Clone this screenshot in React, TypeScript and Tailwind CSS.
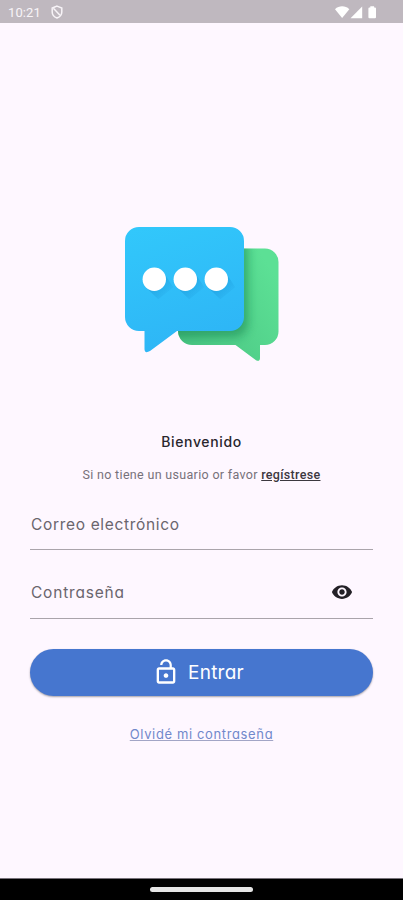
import { useState } from "react";

function StatusBar() {
  return (
    <header className="flex h-[23px] items-center bg-[#bfb8bf] pl-2 pr-[26px] text-[#f8f4f8]">
      <span className="w-[43px] pt-px font-[Roboto] text-[13px] leading-none tracking-[0.1px]">10:21</span>
      <svg width="12" height="14" viewBox="0 0 12 14" fill="none" stroke="currentColor" strokeWidth="1.5">
        <path d="M6 1.1 10.8 3v4c0 2.7-1.9 5-4.8 6-2.9-1-4.8-3.3-4.8-6V3Z" />
        <path d="m2.4 3.3 6.6 7" />
      </svg>
      <svg width="42" height="13" viewBox="0 0 42 13" fill="#fff" className="mt-px ml-auto">
        <path d="M0 3.2C4-.6 10.3-.6 14.3 3.2L7.15 12Z" />
        <path d="M15.5 12.2 27.2.5v11.7Z" />
        <path d="M35.3.3h3.800v1.300h.900a1 1 0 0 1 1 1v8.600a1 1 0 0 1-1 1h-5.600a1 1 0 0 1-1-1V2.600a1 1 0 0 1 1-1h.900Z" />
      </svg>
    </header>
  );
}

function ChatLogo() {
  return (
    <svg width="154" height="135" viewBox="0 0 154 135" className="mx-auto block" aria-hidden>
      <defs>
        <linearGradient id="blue" x1="0" y1="0" x2="0.3" y2="1">
          <stop offset="0" stopColor="#32c8fb" />
          <stop offset="1" stopColor="#2eb6f6" />
        </linearGradient>
        <linearGradient id="green" x1="0" y1="1" x2="1" y2="0.3">
          <stop offset="0" stopColor="#47c07f" />
          <stop offset="1" stopColor="#5ce095" />
        </linearGradient>
        <linearGradient id="dotShade" x1="0" y1="0" x2="1" y2="1">
          <stop offset="0.3" stopColor="#168ccf" stopOpacity="0.5" />
          <stop offset="0.9" stopColor="#168ccf" stopOpacity="0" />
        </linearGradient>
        <filter id="soft" x="-20%" y="-20%" width="140%" height="140%">
          <feGaussianBlur stdDeviation="5" />
        </filter>
        <clipPath id="greenClip">
          <path d="M53 21.5h87a13.5 13.5 0 0 1 13.5 13.5v69.5a13.5 13.5 0 0 1-13.5 13.5h-5v13q0 4-4 2.3L110.5 118H67A14 14 0 0 1 53 104Z" />
        </clipPath>
      </defs>
      <g clipPath="url(#greenClip)">
        <rect x="50" y="20" width="104" height="115" fill="url(#green)" />
        <rect x="6" y="10" width="117" height="100" rx="14" fill="#188451" opacity="0.55" filter="url(#soft)" />
      </g>
      <path
        d="M14 0h91a14 14 0 0 1 14 14v76a14 14 0 0 1-14 14H52L25 124q-5.5 3-5.5-2v-18H14A14 14 0 0 1 0 90V14A14 14 0 0 1 14 0Z"
        fill="url(#blue)"
      />
      {[29.3, 60.3, 91.3].map((x) => (
        <g key={x} transform={`translate(${x} 52.3)`}>
          <path d="M-8.3 8.3 4 20 19 8 8.3-8.3Z" fill="url(#dotShade)" />
          <circle r="11.7" fill="#fff" />
        </g>
      ))}
    </svg>
  );
}

export default function App() {
  const [email, setEmail] = useState("");
  const [password, setPassword] = useState("");
  const [visible, setVisible] = useState(false);

  return (
    <div className="flex h-[900px] w-[403px] flex-col overflow-hidden bg-[#fef7ff] font-[Inter,sans-serif] [font-feature-settings:'cv11']">
      <StatusBar />

      <main className="flex-1 px-[30px] pt-[204px]">
        <ChatLogo />

        <h1 className="mt-[70px] text-center text-[14px] leading-5 font-medium tracking-[0.65px] text-[#29262c]">
          Bienvenido
        </h1>
        <p className="mt-[13px] text-center font-[Roboto] text-[12.5px] leading-5 tracking-[0.32px] whitespace-nowrap text-[#77717a]">
          Si no tiene un usuario or favor{" "}
          <a className="font-medium text-[#3c383f] underline underline-offset-1">regístrese</a>
        </p>

        <form onSubmit={(e) => e.preventDefault()}>
          <label className="mt-[13px] flex h-[52px] items-center border-b border-[#aaa4ab] pt-0.5 pl-px">
            <input
              type="email"
              value={email}
              onChange={(e) => setEmail(e.target.value)}
              placeholder="Correo electrónico"
              className="w-full bg-transparent text-[15.5px] tracking-[0.67px] outline-none placeholder:text-[#6a656d]"
            />
          </label>
          <div className="mt-4 flex h-[53px] items-center border-b border-[#aaa4ab] pt-px pr-5 pl-px">
            <input
              type={visible ? "text" : "password"}
              value={password}
              onChange={(e) => setPassword(e.target.value)}
              placeholder="Contraseña"
              className="min-w-0 flex-1 bg-transparent text-[15.5px] tracking-[0.8px] outline-none placeholder:text-[#6a656d]"
            />
            <button type="button" aria-label="Contraseña" className="mb-0.5" onClick={() => setVisible((v) => !v)}>
              <svg width="22" height="22" viewBox="0 0 24 24" fill="#242127">
                <path d="M12 4.5C7 4.5 2.73 7.61 1 12c1.73 4.39 6 7.5 11 7.5s9.27-3.11 11-7.5c-1.73-4.39-6-7.5-11-7.5zM12 17c-2.76 0-5-2.24-5-5s2.24-5 5-5 5 2.24 5 5-2.24 5-5 5zm0-8c-1.66 0-3 1.34-3 3s1.34 3 3 3 3-1.34 3-3-1.34-3-3-3z" />
              </svg>
            </button>
          </div>

          <button
            type="submit"
            className="mt-[30px] flex h-[47px] w-full items-center justify-center gap-2 rounded-full bg-[#4676cf] pr-[7px] text-white shadow-[0_1px_2px_rgba(0,0,0,0.35)]"
          >
            <svg width="28" height="28" viewBox="0 0 24 24" fill="currentColor" className="mb-0.5">
              <path d="M12 17c1.1 0 2-.9 2-2s-.9-2-2-2-2 .9-2 2 .9 2 2 2zm6-9h-1V6c0-2.76-2.24-5-5-5S7 3.24 7 6h1.9c0-1.71 1.39-3.1 3.1-3.1s3.1 1.39 3.1 3.1v2H6c-1.1 0-2 .9-2 2v10c0 1.1.9 2 2 2h12c1.1 0 2-.9 2-2V10c0-1.1-.9-2-2-2zm0 12H6V10h12v10z" />
            </svg>
            <span className="text-[19px] leading-none tracking-[0.25px]">Entrar</span>
          </button>
        </form>

        <a className="mx-auto mt-[28px] block w-fit text-[13px] leading-5 tracking-[0.63px] text-[#7188cb] underline decoration-[#a2a5c6] underline-offset-1">
          Olvidé mi contraseña
        </a>
      </main>

      <footer className="flex h-[22px] justify-center border-t border-[#77727a] bg-black pt-[8px]">
        <div className="h-[5px] w-[103px] rounded-full bg-[#e5e5e5]" />
      </footer>
    </div>
  );
}
